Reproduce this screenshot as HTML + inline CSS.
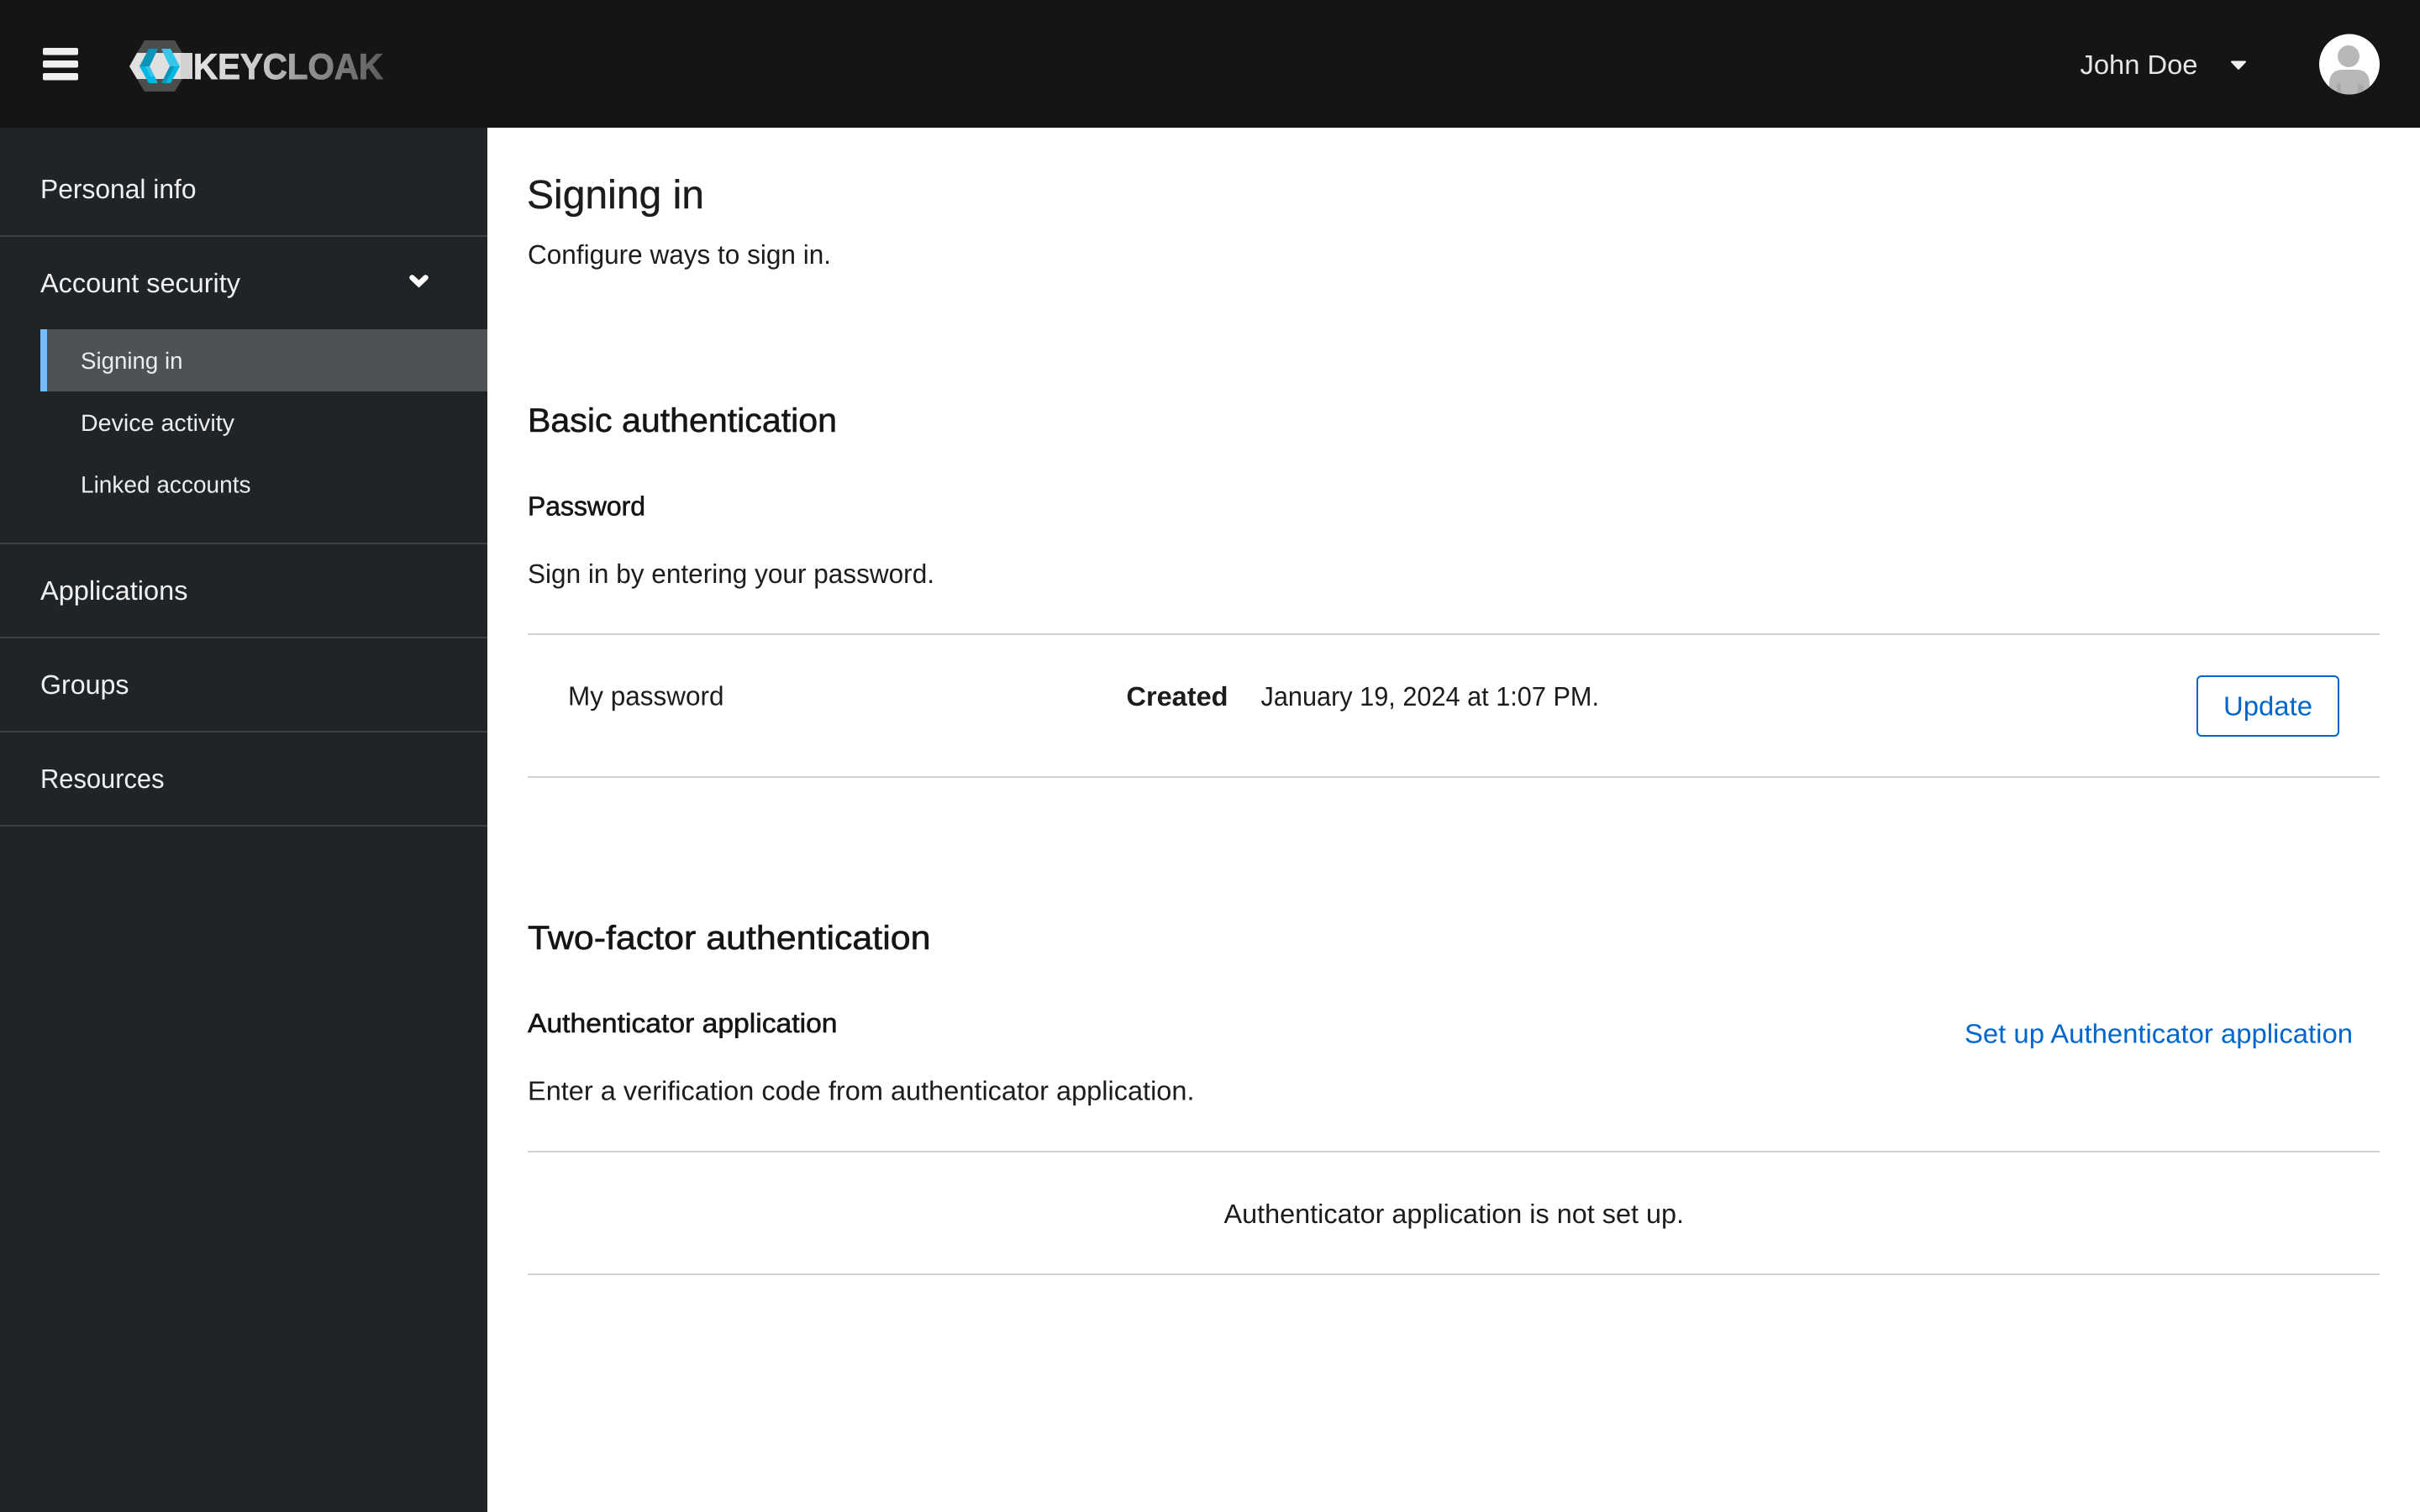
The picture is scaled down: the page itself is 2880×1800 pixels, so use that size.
<!DOCTYPE html>
<html lang="en">
<head>
<meta charset="utf-8">
<title>Signing in</title>
<style>
html,body{margin:0;padding:0;width:2880px;height:1800px;overflow:hidden;background:#fff}
svg{display:block}
text{font-family:"Liberation Sans",sans-serif;font-size:32px;text-rendering:geometricPrecision}
.s{fill:#f0f0f0}
.sub{fill:#ececec;font-size:28px}
.m{fill:#1c1c1c}
.med{fill:#151515;stroke:#151515;stroke-width:.6px}
.b{fill:#0066cc}
</style>
</head>
<body>
<svg xmlns="http://www.w3.org/2000/svg" width="2880" height="1800" viewBox="0 0 2880 1800">
<defs>
<clipPath id="av"><circle cx="2796" cy="76.5" r="36"/></clipPath>
<linearGradient id="kc" gradientUnits="userSpaceOnUse" x1="230" y1="0" x2="456" y2="0">
<stop offset="0" stop-color="#e4e4e4"/><stop offset=".35" stop-color="#cacaca"/><stop offset=".6" stop-color="#929292"/><stop offset="1" stop-color="#5c5c5c"/>
</linearGradient>
</defs>

<!-- backgrounds -->
<rect x="0" y="0" width="2880" height="152" fill="#151515"/>
<rect x="0" y="152" width="580" height="1648" fill="#212427"/>

<!-- hamburger -->
<rect x="51" y="57" width="42" height="8.5" rx="2" fill="#f0f0f0"/>
<rect x="51" y="72" width="42" height="8.5" rx="2" fill="#f0f0f0"/>
<rect x="51" y="87" width="42" height="8.5" rx="2" fill="#f0f0f0"/>

<!-- logo -->
<polygon points="172,48 208,48 217,63 217,94 208,109 172,109 163,94 163,63" fill="#4d4d4d"/>
<polygon points="154,79 163,63 229,63 229,94 163,94" fill="#e0e0e0"/>
<polygon points="215,63 229,63 229,94 215,94" fill="#d2d2d2"/>
<polygon points="166,79 177,58 188,58 178,79" fill="#0c93b5"/>
<polygon points="166,79 178,79 188,99 177,99" fill="#00b8e3"/>
<polygon points="173,79 178,79 184,91 179,91" fill="#33c6e9"/>
<polygon points="214,79 203,58 192,58 202,79" fill="#33c6e9"/>
<polygon points="214,79 202,79 192,99 203,99" fill="#00b8e3"/>
<polygon points="202,79 192,99 197,99 207,79" fill="#0c93b5"/>
<text x="230" y="94" style="font-size:43px;font-weight:700;stroke:url(#kc);stroke-width:1px" fill="url(#kc)" textLength="226" lengthAdjust="spacingAndGlyphs">KEYCLOAK</text>

<!-- user -->
<text x="2475.5" y="88" style="fill:#e6e6e6" textLength="140" lengthAdjust="spacingAndGlyphs">John Doe</text>
<path d="M2656 72.5 H2672 A1 1 0 0 1 2672.7 74.2 L2664.8 82.5 A1 1 0 0 1 2663.2 82.5 L2655.3 74.2 A1 1 0 0 1 2656 72.5Z" fill="#f0f0f0"/>
<circle cx="2796" cy="76.5" r="36" fill="#fff"/>
<g clip-path="url(#av)">
<circle cx="2795" cy="67" r="13" fill="#b8b8b8"/>
<path d="M2790 55 A13 13 0 0 0 2795 80 A13 13 0 0 1 2790 55Z" fill="#a9a9a9"/>
<path d="M2772 120 V100 Q2772 83 2788 83 H2804 Q2820 83 2820 100 V120Z" fill="#b8b8b8"/>
<path d="M2781 100 Q2785 98 2786 100 V120 H2781Z" fill="#a9a9a9"/>
<path d="M2806 100 Q2812 100 2813 104 V120 H2806Z" fill="#a9a9a9"/>
</g>

<!-- sidebar -->
<text class="s" x="48" y="236" textLength="185.5" lengthAdjust="spacingAndGlyphs">Personal info</text>
<rect x="0" y="280" width="580" height="2" fill="#3c3f42"/>
<text class="s" x="48" y="348" textLength="238" lengthAdjust="spacingAndGlyphs">Account security</text>
<polyline points="490.5,330.5 498.5,338 506.5,330.5" fill="none" stroke="#fff" stroke-width="6.5" stroke-linecap="round"/>
<rect x="48" y="392" width="8" height="74" fill="#73bcf7"/>
<rect x="56" y="392" width="524" height="74" fill="#4f5255"/>
<text class="sub" x="96" y="439" textLength="121.5" lengthAdjust="spacingAndGlyphs">Signing in</text>
<text class="sub" x="96" y="513" textLength="183" lengthAdjust="spacingAndGlyphs">Device activity</text>
<text class="sub" x="96" y="586.5" textLength="202.5" lengthAdjust="spacingAndGlyphs">Linked accounts</text>
<rect x="0" y="646" width="580" height="2" fill="#3c3f42"/>
<text class="s" x="48" y="714" textLength="175.5" lengthAdjust="spacingAndGlyphs">Applications</text>
<rect x="0" y="758" width="580" height="2" fill="#3c3f42"/>
<text class="s" x="48" y="826" textLength="105.5" lengthAdjust="spacingAndGlyphs">Groups</text>
<rect x="0" y="870" width="580" height="2" fill="#3c3f42"/>
<text class="s" x="48" y="938" textLength="147.5" lengthAdjust="spacingAndGlyphs">Resources</text>
<rect x="0" y="982" width="580" height="2" fill="#3c3f42"/>

<!-- main -->
<text class="m" x="627" y="248" style="font-size:48px;stroke:#1c1c1c;stroke-width:.4px" textLength="211" lengthAdjust="spacingAndGlyphs">Signing in</text>
<text class="m" x="628" y="314" textLength="361" lengthAdjust="spacingAndGlyphs">Configure ways to sign in.</text>

<text class="med" x="628" y="514" style="font-size:40px" textLength="368" lengthAdjust="spacingAndGlyphs">Basic authentication</text>
<text class="med" x="628" y="613.5" textLength="140" lengthAdjust="spacingAndGlyphs">Password</text>
<text class="m" x="628" y="694" textLength="484" lengthAdjust="spacingAndGlyphs">Sign in by entering your password.</text>
<rect x="628" y="754" width="2204" height="2" fill="#d2d2d2"/>
<text class="m" x="676" y="839.5" textLength="185.5" lengthAdjust="spacingAndGlyphs">My password</text>
<text class="m" x="1340.5" y="840" style="font-weight:700" textLength="121" lengthAdjust="spacingAndGlyphs">Created</text>
<text class="m" x="1500.5" y="840" textLength="402.5" lengthAdjust="spacingAndGlyphs">January 19, 2024 at 1:07 PM.</text>
<rect x="2615" y="805" width="168" height="71" rx="5" fill="#fff" stroke="#0066cc" stroke-width="2"/>
<text class="b" x="2646" y="851.5" textLength="106" lengthAdjust="spacingAndGlyphs">Update</text>
<rect x="628" y="924" width="2204" height="2" fill="#d2d2d2"/>

<text class="med" x="628" y="1130" style="font-size:40px" textLength="479.5" lengthAdjust="spacingAndGlyphs">Two-factor authentication</text>
<text class="med" x="628" y="1229" textLength="368.5" lengthAdjust="spacingAndGlyphs">Authenticator application</text>
<text class="m" x="628" y="1309.5" textLength="793.5" lengthAdjust="spacingAndGlyphs">Enter a verification code from authenticator application.</text>
<text class="b" x="2338" y="1241.5" textLength="462" lengthAdjust="spacingAndGlyphs">Set up Authenticator application</text>
<rect x="628" y="1370" width="2204" height="2" fill="#d2d2d2"/>
<text class="m" x="1456.5" y="1456" textLength="547.5" lengthAdjust="spacingAndGlyphs">Authenticator application is not set up.</text>
<rect x="628" y="1516" width="2204" height="2" fill="#d2d2d2"/>
</svg>
</body>
</html>
